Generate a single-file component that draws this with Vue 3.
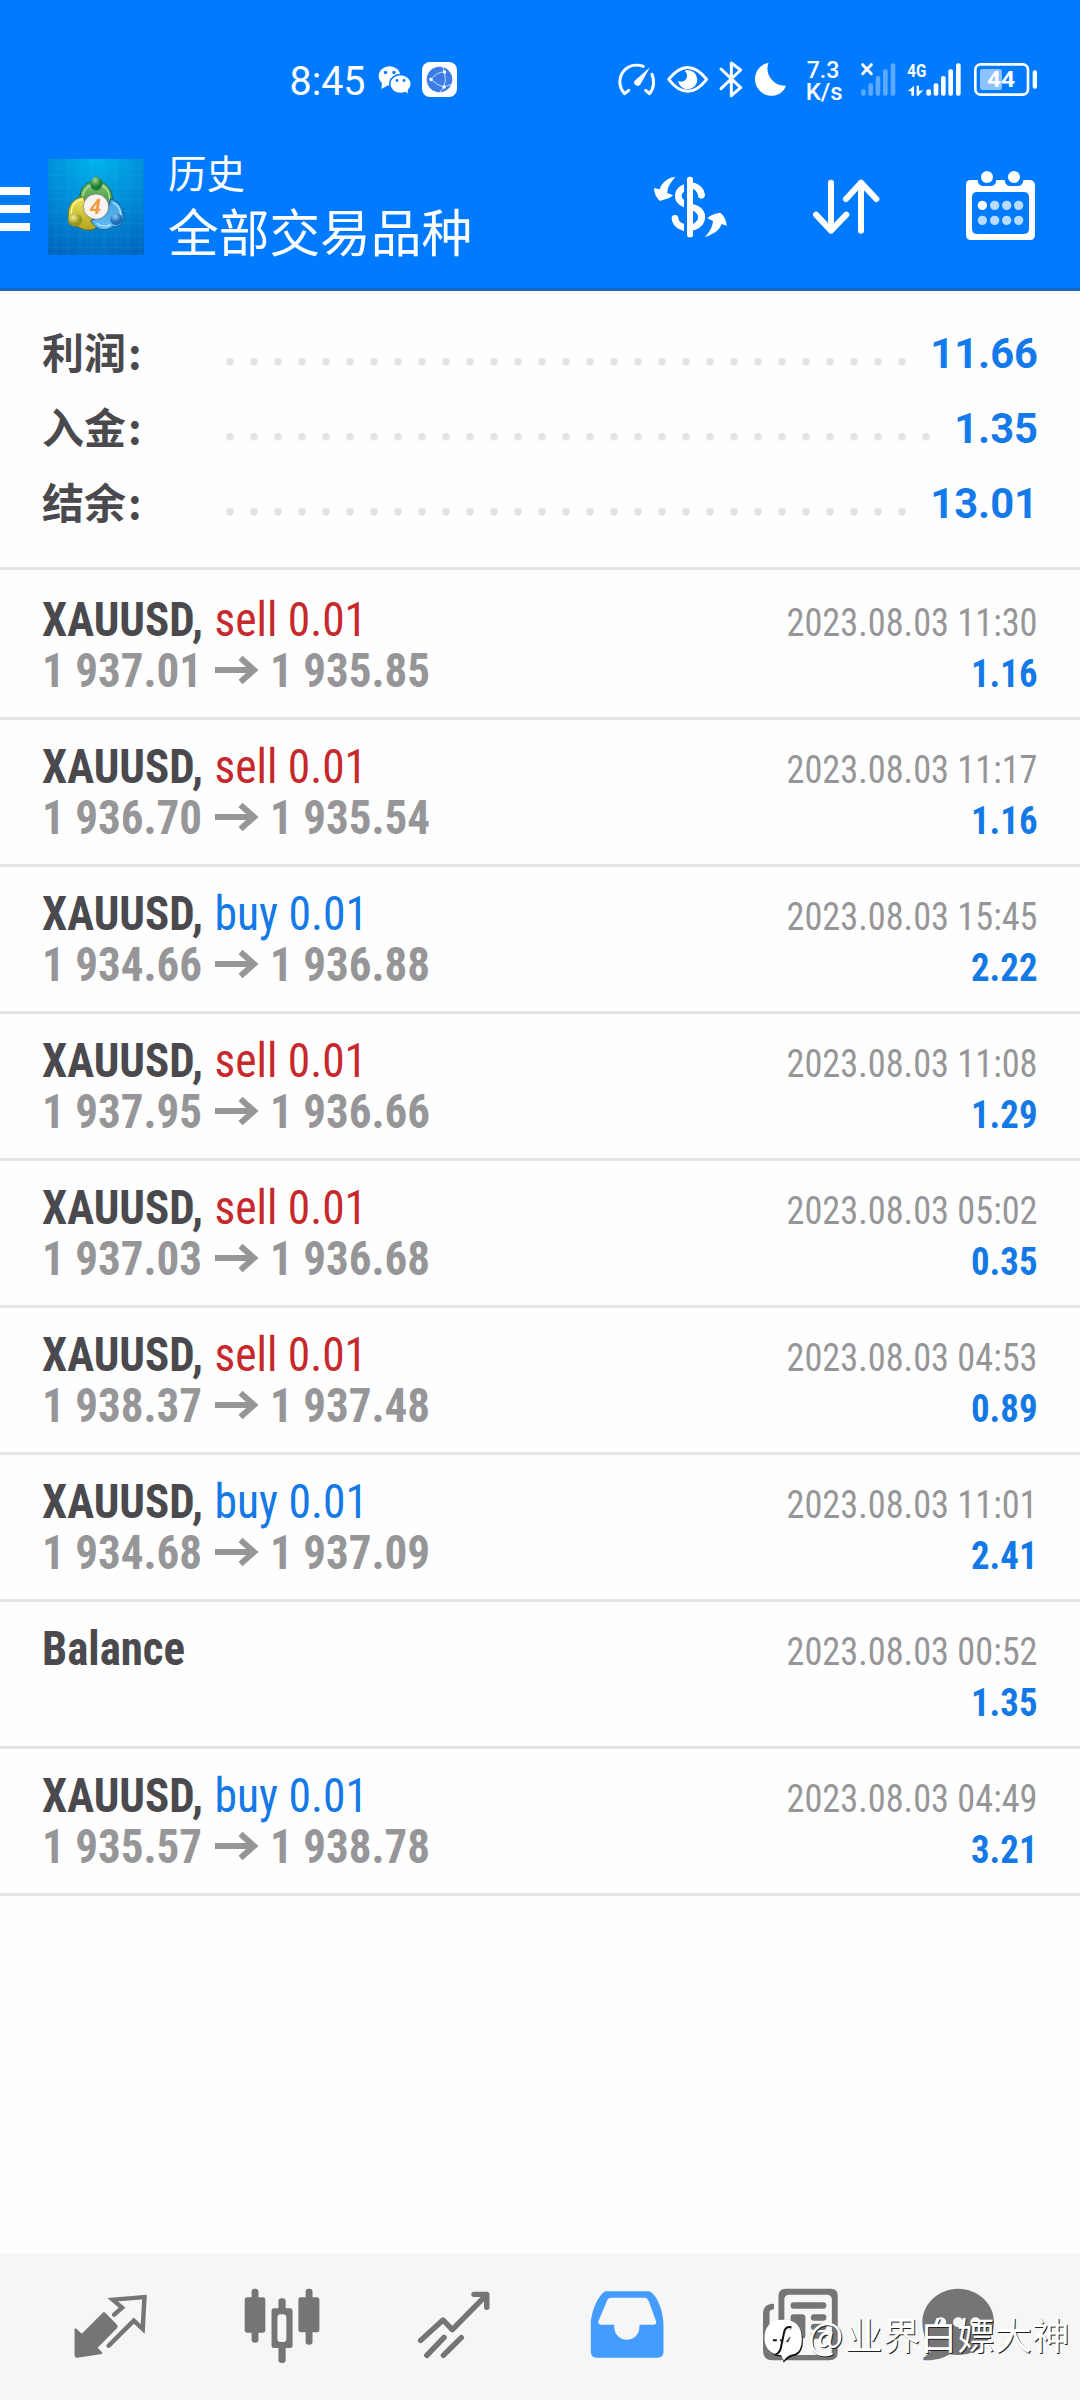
<script setup>
const summary = [
  { label: '利润', value: '11.66', dots: 29 },
  { label: '入金', value: '1.35', dots: 30 },
  { label: '结余', value: '13.01', dots: 29 },
]

const deals = [
  { side: 'sell', open: '1 937.01', close: '1 935.85', time: '2023.08.03 11:30', profit: '1.16' },
  { side: 'sell', open: '1 936.70', close: '1 935.54', time: '2023.08.03 11:17', profit: '1.16' },
  { side: 'buy', open: '1 934.66', close: '1 936.88', time: '2023.08.03 15:45', profit: '2.22' },
  { side: 'sell', open: '1 937.95', close: '1 936.66', time: '2023.08.03 11:08', profit: '1.29' },
  { side: 'sell', open: '1 937.03', close: '1 936.68', time: '2023.08.03 05:02', profit: '0.35' },
  { side: 'sell', open: '1 938.37', close: '1 937.48', time: '2023.08.03 04:53', profit: '0.89' },
  { side: 'buy', open: '1 934.68', close: '1 937.09', time: '2023.08.03 11:01', profit: '2.41' },
  { side: '', time: '2023.08.03 00:52', profit: '1.35' },
  { side: 'buy', open: '1 935.57', close: '1 938.78', time: '2023.08.03 04:49', profit: '3.21' },
]

const bars = [
  { x: 785, y: 148 },
  { x: 807, y: 130 },
  { x: 829, y: 108 },
  { x: 851, y: 88 },
  { x: 874, y: 70 },
]
</script>

<template>
  <div class="screen">
    <header class="header">
      <div class="status">
        <svg class="status-left" viewBox="285 55 180 50" width="180" height="50">
          <text x="289.5" y="95" class="clock" textLength="76" lengthAdjust="spacingAndGlyphs">8:45</text>
          <g fill="#fff">
            <ellipse cx="389.500" cy="76" rx="10.800" ry="9.800" />
            <path d="M382 82l-.5 7 6-3.500z" />
            <ellipse cx="400.500" cy="84" rx="11.500" ry="10.200" fill="#007aff" />
            <ellipse cx="400.500" cy="84" rx="10" ry="8.800" />
            <path d="M403 90l5 3.500-.8-6z" />
            <rect x="422" y="62" width="35" height="35" rx="8" />
          </g>
          <g fill="#007aff">
            <circle cx="385.500" cy="72.500" r="1.700" /><circle cx="394" cy="72.500" r="1.700" />
            <circle cx="397" cy="80.500" r="1.400" /><circle cx="404" cy="80.500" r="1.400" />
          </g>
          <circle cx="439.500" cy="79.500" r="12.800" fill="#3b7ce6" />
          <g fill="none" stroke="#c4dbfb" stroke-width="1">
            <path d="M431 79.500q6-8 13.500-7.500M431 79.500q6 6 13 7.500M444.500 72q2 8-.5 15M444 87l-4 5M444.500 72l-2-5M444 87l8-3" />
          </g>
          <g fill="#fff"><circle cx="431" cy="79.500" r="1.700" /><circle cx="444.500" cy="72" r="1.700" /><circle cx="444" cy="87" r="1.700" /></g>
        </svg>
        <svg class="status-right" viewBox="0 45 1320 150" width="440" height="50">
          <g fill="none" stroke="#fff" stroke-width="9" stroke-linecap="round" stroke-linejoin="round">
            <path d="M86 151l-12 10C54 140 56 110 72 92 88 75 111 72 130 79M156 103c8 18 7 42-8 58l-11-10" />
            <path d="M394 69v98M363 87l59 56-28 24V69l28 21-59 56" />
          </g>
          <path d="M150 82L122 132a10 10 0 1 1-18-10z" fill="#fff" />
          <path d="M206 118Q263 47 320 118 263 190 206 118z" fill="none" stroke="#fff" stroke-width="9" stroke-linejoin="round" />
          <path d="M262 90a29 29 0 1 1-28 32q14 8 24-4 8-14-4-26z" fill="#fff" />
          <path d="M506 68c-14 30 12 72 52 69-8 22-28 31-47 30-26-2-46-24-46-50 0-24 18-45 41-49z" fill="#fff" />
          <text x="620" y="115" class="rate" textLength="98" lengthAdjust="spacingAndGlyphs">7.3</text>
          <text x="617" y="180" class="rate" textLength="111" lengthAdjust="spacingAndGlyphs">K/s</text>
          <path d="M788 74l26 27M814 74l-26 27" stroke="#fff" stroke-width="9" stroke-linecap="round" />
          <g fill="#fff" opacity=".36">
            <rect v-for="b in bars" :key="b.x" :x="b.x - 2" :y="b.y" width="14" :height="167 - b.y" rx="6" />
          </g>
          <text x="922" y="111" class="net" textLength="57" lengthAdjust="spacingAndGlyphs">4G</text>
          <path d="M923 154l19-17v30h-8v-14zM950 137h7v16l13-3-15 17h-5z" fill="#fff" />
          <g fill="#fff">
            <rect v-for="b in bars" :key="b.x" :x="b.x + 194" :y="b.y" width="14" :height="167 - b.y" rx="6" />
          </g>
          <rect x="1126" y="73" width="158" height="91" rx="16" fill="none" stroke="#fff" stroke-width="8" />
          <rect x="1140" y="87" width="66" height="63" rx="7" fill="#8bc2ff" />
          <rect x="1298" y="91" width="13" height="55" rx="6" fill="#fff" />
          <text x="1161" y="142" class="battery" textLength="84" lengthAdjust="spacingAndGlyphs">44</text>
        </svg>
      </div>

      <div class="toolbar">
        <div class="menu"><i></i><i></i><i></i></div>
        <svg class="logo" viewBox="24 27 288 288" width="96" height="96">
          <defs>
            <radialGradient id="sky" cx=".5" cy="0" r="1.100">
              <stop offset="0" stop-color="#00b4ec" /><stop offset=".5" stop-color="#008bd6" /><stop offset="1" stop-color="#0064bd" />
            </radialGradient>
            <linearGradient id="green" x2="0" y2="1"><stop offset="0" stop-color="#86c56c" /><stop offset="1" stop-color="#258640" /></linearGradient>
            <linearGradient id="gold" x2="0" y2="1"><stop offset="0" stop-color="#eee65c" /><stop offset="1" stop-color="#b3a51c" /></linearGradient>
            <linearGradient id="azure" x2="0" y2="1"><stop offset="0" stop-color="#3fa0e0" /><stop offset="1" stop-color="#64bdf2" /></linearGradient>
            <radialGradient id="g1" cx=".4" cy=".25"><stop offset="0" stop-color="#9ad88c" /><stop offset="1" stop-color="#1e7a34" /></radialGradient>
            <radialGradient id="g2" cx=".35" cy=".3"><stop offset="0" stop-color="#f4ed8c" /><stop offset="1" stop-color="#9a9420" /></radialGradient>
            <radialGradient id="g3" cx=".4" cy=".25"><stop offset="0" stop-color="#86cdf6" /><stop offset="1" stop-color="#1d6cb4" /></radialGradient>
          </defs>
          <rect x="24" y="27" width="288" height="288" fill="url(#sky)" />
          <path d="M48 27v288M84 27v288M120 27v288M156 27v288M192 27v288M228 27v288M264 27v288M300 27v288M24 76h288M24 112h288M24 148h288M24 184h288M24 220h288M24 256h288M24 292h288" stroke="#5cc8f5" stroke-opacity=".18" stroke-width="2" />
          <path d="M120 150c-4-34 20-56 48-56 30 0 54 26 48 62l-12 36-36-22-40-10z" fill="url(#green)" stroke="#1c6336" stroke-width="3" />
          <path d="M128 146c0-26 18-42 40-43 24 0 42 20 40 44" fill="none" stroke="#b9e5a4" stroke-width="4" />
          <path d="M86 216c-6-42 6-70 44-76l18 46 22 46c-14 12-38 10-56-2-14 0-24-4-28-14z" fill="url(#gold)" stroke="#6e7522" stroke-width="3" />
          <path d="M94 192c0-24 12-40 34-44" fill="none" stroke="#f9f6a2" stroke-width="4" />
          <path d="M212 146c32 10 42 40 36 66-4 14-16 20-30 18-18 14-48 14-66-18l48-20z" fill="url(#azure)" stroke="#1b5d94" stroke-width="3" />
          <path d="M218 157c16 8 24 22 24 38M170 220c14 10 30 10 42 4" fill="none" stroke="#b5e3fb" stroke-width="4" />
          <ellipse cx="169" cy="101" rx="18" ry="21" fill="url(#g1)" />
          <ellipse cx="106" cy="210" rx="21" ry="19" fill="url(#g2)" />
          <ellipse cx="229" cy="208" rx="18" ry="18" fill="url(#g3)" />
          <circle cx="168" cy="170" r="38" fill="#f6f3f2" stroke="#555" stroke-opacity=".5" stroke-width="3" />
          <text x="149" y="191" class="four" textLength="34" lengthAdjust="spacingAndGlyphs">4</text>
        </svg>
        <div class="titles">
          <div class="caption">历史</div>
          <div class="subject">全部交易品种</div>
        </div>
        <div class="actions">
          <svg viewBox="99 60 222 210" width="74" height="70">
            <g fill="none" stroke="#fff" stroke-width="20" stroke-linecap="round">
              <path d="M244 136c0-38-66-34-69 0-2 38 70 26 70 64 0 44-77 44-80 5" />
            </g>
            <rect x="192" y="75" width="37" height="192" fill="#007aff" />
            <path d="M222 108q14 4 23 26M222 173q23 12 23 29t-23 29" fill="none" stroke="#fff" stroke-width="19" stroke-linecap="round" />
            <rect x="201" y="80" width="18" height="182" rx="8" fill="#fff" />
            <path d="M166 81c-20 0-42 17-47 37l-17-4c1 16 7 31 19 39 13-6 27-5 38-17l-17-7c0-18 11-33 24-48z" fill="#fff" />
            <path d="M255 261c20-6 43-18 50-39l15 5c-1-17-8-31-20-39-14 2-28 6-38 17l17 8c-1 17-11 34-24 48z" fill="#fff" />
          </svg>
          <svg viewBox="573 60 210 210" width="70" height="70">
            <path d="M633 98v144M588 194l45 48 46-48M723 242V98M678 147l45-49 46 49" fill="none" stroke="#fff" stroke-width="18" stroke-linecap="round" stroke-linejoin="round" />
          </svg>
          <svg viewBox="1035 60 210 210" width="70" height="70">
            <path fill-rule="evenodd" d="M1052 90h176q17 0 17 17v148q0 15-15 15h-177q-15 0-15-15V105q0-15 14-15zM1072 126q-16 0-16 16v94q0 16 16 16h139q16 0 16-16v-94q0-16-16-16z" fill="#fff" />
            <path d="M1073 88h56q0 20-16 20h-24q-16 0-16-20zM1154 88h56q0 20-16 20h-24q-16 0-16-20z" fill="#007aff" />
            <circle cx="1101" cy="81" r="18" fill="#fff" /><circle cx="1182" cy="81" r="18" fill="#fff" />
            <g fill="#b8dcff">
              <circle cx="1087" cy="166" r="14" fill="#fff" /><circle cx="1124" cy="166" r="14" /><circle cx="1160" cy="166" r="14" /><circle cx="1196" cy="166" r="14" />
              <circle cx="1087" cy="211" r="14" /><circle cx="1124" cy="211" r="14" /><circle cx="1160" cy="211" r="14" /><circle cx="1196" cy="211" r="14" />
            </g>
          </svg>
        </div>
      </div>
    </header>

    <section class="summary">
      <div v-for="s in summary" :key="s.label" class="sum-row">
        <span class="sum-label">{{ s.label }}<span class="colon">:</span></span>
        <svg class="leader" width="708" height="75">
          <path :d="`M6 46.800h${(s.dots - 1) * 24 + 1}`" stroke="#e3e3e3" stroke-width="7.500" stroke-linecap="round" stroke-dasharray="0 24" />
        </svg>
        <span class="sum-value">{{ s.value }}</span>
      </div>
    </section>

    <main class="deals">
      <div v-for="(d, i) in deals" :key="i" class="deal">
        <svg class="deal-left" width="420" height="144">
          <template v-if="d.side">
            <text x="0" y="63" class="symbol" textLength="161" lengthAdjust="spacingAndGlyphs">XAUUSD,</text>
            <text x="172.500" y="63" :class="d.side" :textLength="d.side === 'sell' ? 152.5 : 153.5" lengthAdjust="spacingAndGlyphs">{{ d.side }} 0.01</text>
            <text x="0" y="114" class="price" textLength="160" lengthAdjust="spacingAndGlyphs">{{ d.open }}</text>
            <path d="M173 97h38M198.500 85l13.500 12-13.500 12" class="arrow" />
            <text x="228" y="114" class="price" textLength="160" lengthAdjust="spacingAndGlyphs">{{ d.close }}</text>
          </template>
          <text v-else x="0" y="63" class="symbol" textLength="143" lengthAdjust="spacingAndGlyphs">Balance</text>
        </svg>
        <svg class="deal-right" width="260" height="144">
          <text x="8.500" y="63" class="time" textLength="251" lengthAdjust="spacingAndGlyphs">{{ d.time }}</text>
          <text x="193" y="114" class="profit" textLength="66.500" lengthAdjust="spacingAndGlyphs">{{ d.profit }}</text>
        </svg>
      </div>
    </main>

    <nav class="nav">
      <svg viewBox="210.500 145 217.800 225" preserveAspectRatio="none">
        <path d="M300 218q4 0 7 4l30 32q6 6 1 12l-56 58 14 15-2 4-70 11q-9 1-9-7v-80l4-1 17 16 58-60q3-4 6-4z" fill="#757575" />
        <path d="M330 225l23-21-27-24 92-8-5 96-26-25-73 75" fill="none" stroke="#757575" stroke-width="13" stroke-linecap="round" />
      </svg>
      <svg viewBox="709.900 145 217.800 225" preserveAspectRatio="none">
        <g fill="#757575">
          <rect x="729" y="147" width="20" height="162" rx="9" /><rect x="709" y="173" width="60" height="106" rx="7" />
          <rect x="886" y="147" width="20" height="168" rx="9" /><rect x="865" y="173" width="61" height="105" rx="7" />
          <rect x="807" y="176" width="21" height="194" rx="9" /><rect x="787" y="206" width="61" height="119" rx="7" />
        </g>
        <rect x="804" y="224" width="26" height="83" rx="10" fill="#f6f6f6" />
      </svg>
      <svg viewBox="1209.400 145 217.800 225" preserveAspectRatio="none">
        <path d="M1220 302l65-61 27 29 95-100M1375 164h37v39M1238 347l50-54M1286 347l52-53" fill="none" stroke="#757575" stroke-width="16" stroke-linecap="round" stroke-linejoin="round" />
      </svg>
      <svg viewBox="143.600 145 217.800 225" preserveAspectRatio="none">
        <path fill-rule="evenodd" d="M188 155h128c24 12 41 62 41 100v82q0 17-17 17H163q-17 0-17-17v-82c0-32 18-86 42-100zM205 174q-8 0-11 7l-26 64q-2 10 8 10h38v8c2 50 72 50 73 0v-8h40q10 0 9-9l-22-62q-4-10-12-10z" fill="#449cff" />
      </svg>
      <svg viewBox="646 145 217.800 225" preserveAspectRatio="none">
        <path d="M678 192q-32-1-32 32v108q0 30 28 30h165q24 0 24-24V168q0-21-20-21H713q-22 0-22 22v164q0 12-7 12-19 0-19-16V224q-3-13 13-16z" fill="#757575" />
        <rect x="708" y="165" width="138" height="181" rx="14" fill="#f6f6f6" />
        <g fill="#757575">
          <rect x="726" y="188" width="104" height="19" rx="9" /><rect x="726" y="224" width="43" height="73" rx="9" />
          <rect x="785" y="224" width="45" height="19" rx="9" /><rect x="785" y="252" width="45" height="19" rx="9" /><rect x="785" y="278" width="45" height="19" rx="9" />
        </g>
      </svg>
      <svg viewBox="1104.900 145 217.800 225" preserveAspectRatio="none">
        <path d="M1213 147c57 0 104 45 104 100s-46 99-104 99q-12 0-25-2c-18 12-42 19-70 18q-10-1-6-8 22-14 23-28c-17-20-26-48-26-79 0-55 47-100 104-100z" fill="#757575" />
        <g fill="#f6f6f6"><circle cx="1163" cy="248" r="15" /><circle cx="1213" cy="248" r="15" /><circle cx="1263" cy="248" r="15" /></g>
      </svg>
    </nav>

    <div class="watermark">
      <svg viewBox="44 118 116 132" width="39" height="44">
        <path d="M103 123c-40 0-56 24-56 55 0 30 18 50 50 50l3 18c8-8 20-18 32-20 18-4 26-20 26-45 0-38-18-58-55-58z" fill="#111" transform="translate(2 3)" />
        <path d="M101 120c-40 0-56 24-56 55 0 30 18 50 50 52l8 16c6-10 16-17 28-19 18-4 26-20 26-46 0-38-18-58-56-58z" fill="#fff" />
        <path d="M126 143q-18-4-22 14l-10 48q-3 14-16 20M70 182h12M92 182h10" fill="none" stroke="#111" stroke-width="6" />
        <path d="M110 186l12-14-6 14zM120 150l6-4" fill="#333" stroke="#333" stroke-width="2" />
      </svg>
      <span class="at">@</span><span>业界白嫖大神</span>
    </div>
  </div>
</template>

<style>
body {
  margin: 0;
  background: #fff;
}
</style>

<style scoped>
.screen {
  position: relative;
  width: 1080px;
  height: 2400px;
  display: flex;
  flex-direction: column;
  overflow: hidden;
  background: #fefefe;
  font-family: Roboto, "Noto Sans CJK SC", sans-serif;
}
svg {
  display: block;
  flex: none;
  overflow: visible;
}
.header {
  box-sizing: border-box;
  height: 291px;
  background: #007aff;
  border-bottom: 3px solid #1567bf;
}
.status {
  display: flex;
  justify-content: space-between;
  padding: 55px 40px 0 285px;
}
.clock {
  font: 450 40px Roboto, sans-serif;
  fill: #fff;
}
.rate {
  font: 500 71px Roboto, sans-serif;
  fill: #fff;
}
.net {
  font: 700 56px Roboto, sans-serif;
  fill: #fff;
}
.battery {
  font: 700 66px Roboto, sans-serif;
  fill: #fff;
}
.four {
  font: italic 700 58px Roboto, sans-serif;
  fill: #f39a3c;
}
.toolbar {
  display: flex;
  height: 130px;
  padding-top: 43px;
}
.menu {
  display: flex;
  flex-direction: column;
  gap: 10px;
  width: 30px;
  padding-top: 39px;
}
.menu i {
  height: 8px;
  background: #fff;
}
.logo {
  margin: 11px 24px 0 18px;
}
.titles {
  width: 480px;
  margin-top: -3px;
  color: #fff;
  white-space: nowrap;
  font-family: "Noto Sans CJK SC", sans-serif;
}
.caption {
  font-size: 38.500px;
  line-height: 52px;
}
.subject {
  font-size: 50.700px;
  line-height: 67px;
}
.actions {
  display: flex;
  gap: 84px;
  padding: 22px 0 0 5px;
}
.summary {
  box-sizing: border-box;
  height: 279px;
  padding: 24px 42px 0;
  border-bottom: 3px solid #e3e3e3;
}
.sum-row {
  display: flex;
  height: 75px;
}
.sum-label {
  flex: none;
  width: 182px;
  color: #4a4a4e;
  font: 700 42px/72px "Noto Sans CJK SC", sans-serif;
}
.colon {
  margin-left: 2px;
}
.leader {
  margin-right: -40px;
}
.sum-value {
  flex: 1;
  text-align: right;
  color: #1479ea;
  font-size: 41.700px;
  font-weight: 700;
  line-height: 78px;
}
.deals {
  padding-top: 3px;
}
.deal {
  display: flex;
  justify-content: space-between;
  height: 144px;
  padding: 0 42px;
  border-bottom: 3px solid #e3e3e3;
}
.deal text {
  font-family: Roboto, sans-serif;
  font-size: 48px;
  font-stretch: 75%;
  white-space: pre;
}
.deal .symbol {
  font-weight: 700;
  fill: #4a4a4e;
}
.sell {
  fill: #c6282b;
}
.buy {
  fill: #1479e6;
}
.deal .price {
  font-weight: 700;
  fill: #969698;
}
.arrow {
  fill: none;
  stroke: #969698;
  stroke-width: 6;
}
.deal .time {
  font-size: 39.500px;
  fill: #969698;
}
.deal .profit {
  font-size: 39.500px;
  font-weight: 700;
  fill: #1479e6;
}
.nav {
  box-sizing: border-box;
  display: grid;
  grid-template-columns: 172px 172px 172px 174px 172px 144px;
  justify-items: center;
  height: 147px;
  margin-top: auto;
  padding: 35px 50px 0 24px;
  background: #f6f6f6;
}
.nav svg {
  width: 75px;
  height: 75px;
}
.watermark {
  position: absolute;
  left: 764px;
  top: 2306px;
  display: flex;
  color: #fff;
  white-space: nowrap;
  font: 400 37.400px/56px "Noto Sans CJK SC", sans-serif;
  text-shadow: 1px 1px 0 #222;
}
.watermark svg {
  margin: 13px 5px 0 0;
}
.at {
  width: 37px;
}
</style>
